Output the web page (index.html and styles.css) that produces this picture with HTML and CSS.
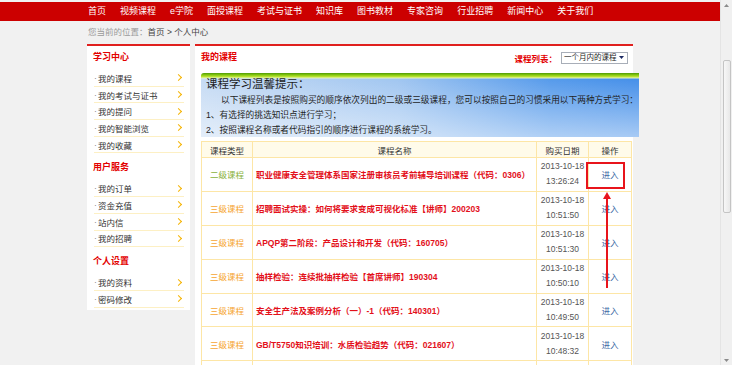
FILE: index.html
```html
<!DOCTYPE html>
<html lang="zh-CN">
<head>
  <meta charset="UTF-8">
  <title>个人中心 - 我的课程</title>
  <link rel="stylesheet" href="styles.css">
</head>
<body>
<div class="page">
  <div class="site">

    <!-- top navigation -->
    <div class="topnav">
      <div class="wrap navlinks">
        <a href="#">首页</a>
        <a href="#">视频课程</a>
        <a href="#">e学院</a>
        <a href="#">面授课程</a>
        <a href="#">考试与证书</a>
        <a href="#">知识库</a>
        <a href="#">图书教材</a>
        <a href="#">专家咨询</a>
        <a href="#">行业招聘</a>
        <a href="#">新闻中心</a>
        <a href="#">关于我们</a>
      </div>
    </div>

    <div class="wrap crumb">
      <span class="muted">您当前的位置：</span>首页 &gt; 个人中心
    </div>

    <div class="wrap columns">

      <!-- left menu -->
      <div class="side">
        <h3>学习中心</h3>
        <ul>
          <li><span class="dot">·</span>我的课程<i class="chev"></i></li>
          <li><span class="dot">·</span>我的考试与证书<i class="chev"></i></li>
          <li><span class="dot">·</span>我的提问<i class="chev"></i></li>
          <li><span class="dot">·</span>我的智能浏览<i class="chev"></i></li>
          <li><span class="dot">·</span>我的收藏<i class="chev"></i></li>
        </ul>
        <h3>用户服务</h3>
        <ul>
          <li><span class="dot">·</span>我的订单<i class="chev"></i></li>
          <li><span class="dot">·</span>资金充值<i class="chev"></i></li>
          <li><span class="dot">·</span>站内信<i class="chev"></i></li>
          <li><span class="dot">·</span>我的招聘<i class="chev"></i></li>
        </ul>
        <h3>个人设置</h3>
        <ul>
          <li><span class="dot">·</span>我的资料<i class="chev"></i></li>
          <li><span class="dot">·</span>密码修改<i class="chev"></i></li>
        </ul>
      </div>

      <!-- main content -->
      <div class="main">
        <div class="mainhead">
          <h3>我的课程</h3>
          <div class="filter">
            <span class="filter-label">课程列表：</span>
            <span class="select">一个月内的课程<svg width="5" height="3" viewBox="0 0 5 3"><path d="M0 0H5L2.5 3Z" fill="#1c2a64"/></svg></span>
          </div>
        </div>

        <div class="banner">
          <div class="banner-title">课程学习温馨提示：</div>
          <p class="indent">以下课程列表是按照购买的顺序依次列出的二级或三级课程，您可以按照自己的习惯采用以下两种方式学习：</p>
          <p>1、有选择的挑选知识点进行学习；</p>
          <p>2、按照课程名称或者代码指引的顺序进行课程的系统学习。</p>
        </div>

        <div class="tablewrap">
          <table class="courses">
            <thead>
              <tr>
                <th class="c-type">课程类型</th>
                <th class="c-name">课程名称</th>
                <th class="c-date">购买日期</th>
                <th class="c-op">操作</th>
              </tr>
            </thead>
            <tbody>
              <tr>
                <td class="lv2">二级课程</td>
                <td class="name">职业健康安全管理体系国家注册审核员考前辅导培训课程（代码：0306）</td>
                <td class="date">2013-10-18<br>13:26:24</td>
                <td class="op"><a href="#">进入</a></td>
              </tr>
              <tr>
                <td class="lv3">三级课程</td>
                <td class="name">招聘面试实操：如何将要求变成可视化标准【讲师】200203</td>
                <td class="date">2013-10-18<br>10:51:50</td>
                <td class="op"><a href="#">进入</a></td>
              </tr>
              <tr>
                <td class="lv3">三级课程</td>
                <td class="name">APQP第二阶段：产品设计和开发（代码：160705）</td>
                <td class="date">2013-10-18<br>10:51:30</td>
                <td class="op"><a href="#">进入</a></td>
              </tr>
              <tr>
                <td class="lv3">三级课程</td>
                <td class="name">抽样检验：连续批抽样检验【首席讲师】190304</td>
                <td class="date">2013-10-18<br>10:50:10</td>
                <td class="op"><a href="#">进入</a></td>
              </tr>
              <tr>
                <td class="lv3">三级课程</td>
                <td class="name">安全生产法及案例分析（一）-1（代码：140301）</td>
                <td class="date">2013-10-18<br>10:49:50</td>
                <td class="op"><a href="#">进入</a></td>
              </tr>
              <tr>
                <td class="lv3">三级课程</td>
                <td class="name">GB/T5750知识培训：水质检验趋势（代码：021607）</td>
                <td class="date">2013-10-18<br>10:48:32</td>
                <td class="op"><a href="#">进入</a></td>
              </tr>
              <tr class="more">
                <td></td>
                <td></td>
                <td></td>
                <td></td>
              </tr>
            </tbody>
          </table>

          <!-- annotation: highlight + arrow -->
          <div class="mark-box"></div>
          <svg class="mark-arrow" width="10" height="96" viewBox="0 0 10 96">
            <path d="M5 0L9 7H1Z" fill="#e8141b"/>
            <rect x="4" y="6" width="2" height="90" fill="#e8141b"/>
          </svg>
        </div>
      </div>
    </div>
  </div>

  <!-- window scrollbar -->
  <div class="scrollbar">
    <svg class="sb-arrow" width="5" height="3" viewBox="0 0 5 3"><path d="M0 3H5L2.5 0Z" fill="#8a8a8a"/></svg>
    <div class="sb-thumb"></div>
    <svg class="sb-arrow sb-down" width="5" height="3" viewBox="0 0 5 3"><path d="M0 0H5L2.5 3Z" fill="#8a8a8a"/></svg>
  </div>
</div>
</body>
</html>
```

FILE: styles.css
```css
body {
  margin: 0;
  background-color: #f1f1f1;
  font-family: "Liberation Sans", "Noto Sans CJK SC", sans-serif;
  color: #333;
}
.page {
  display: flex;
  height: 365px;
  overflow: hidden;
}
.site {
  width: 720px;
  flex: none;
}
.wrap {
  width: 546px;
  margin: 0 auto;
}

/* top nav */
.topnav {
  margin-top: 2px;
  height: 19px;
  background-color: #cc0000;
}
.navlinks {
  display: flex;
  gap: 14px;
  padding-left: 1px;
  box-sizing: border-box;
}
.navlinks a {
  color: #fff;
  font-size: 9px;
  line-height: 19px;
  text-decoration: none;
}

.crumb {
  height: 23px;
  line-height: 23px;
  font-size: 8.5px;
  color: #444;
  padding-left: 1px;
  box-sizing: border-box;
}
.crumb .muted {
  color: #9a9a9a;
}

.columns {
  display: flex;
  gap: 5px;
  align-items: flex-start;
}

/* left menu */
.side {
  width: 103px;
  flex: none;
  background: #fff;
  border-top: 2px solid #e0201e;
  padding: 0 6px 2px 6px;
  box-sizing: border-box;
}
.side h3 {
  margin: 0;
  padding: 8px 0 7px;
  font-size: 9px;
  line-height: 12px;
  color: #e30000;
  font-weight: bold;
}
.side h3:first-child {
  padding-top: 5px;
}
.side ul {
  list-style: none;
  margin: 0;
  padding: 0;
}
.side li {
  display: flex;
  align-items: center;
  margin-left: 1px;
  height: 15.7px;
  font-size: 8.5px;
  color: #333;
  border-bottom: 1px solid #fdf0c4;
}
.dot {
  width: 4px;
  color: #888;
}
.chev {
  margin-left: auto;
  margin-right: 3px;
  width: 4px;
  height: 4px;
  border-top: 1.5px solid #f5b300;
  border-right: 1.5px solid #f5b300;
  transform: rotate(45deg);
}

/* main panel */
.main {
  width: 438px;
  flex: none;
  background: #fff;
  border-top: 2px solid #e0201e;
  padding: 0 0 0 6px;
  box-sizing: border-box;
  height: 330px;
}
.mainhead {
  height: 22px;
  display: flex;
  align-items: center;
  justify-content: space-between;
  padding-right: 5px;
  margin-bottom: 5px;
}
.mainhead h3 {
  margin: 0;
  font-size: 9px;
  color: #e30000;
  font-weight: bold;
  line-height: 12px;
}
.filter {
  display: flex;
  align-items: center;
  margin-top: 1px;
}
.filter-label {
  color: #e30000;
  font-weight: bold;
  font-size: 8.5px;
  margin-right: 4px;
}
.select {
  width: 67px;
  height: 12px;
  box-sizing: border-box;
  border: 1px solid #a8aeb8;
  background: #fff;
  font-size: 7.5px;
  line-height: 10px;
  color: #222;
  padding-left: 2px;
  display: flex;
  align-items: center;
  justify-content: space-between;
  padding-right: 3px;
}

.banner {
  width: 438px;
  height: 64px;
  box-sizing: border-box;
  border-top-left-radius: 3px;
  background:
    linear-gradient(to bottom, #4e9a06 0, #86c80e 2px, #c4e83c 4px, #e6f5c0 5px, rgba(230,245,192,0) 6px),
    linear-gradient(to bottom, rgba(255,255,255,0) 0%, rgba(255,255,255,0.55) 100%),
    linear-gradient(to right, #c3d9f3 0%, #9cc3f0 45%, #4d95ea 80%, #3c8ae8 100%);
  padding: 5px 0 0 5px;
  margin-bottom: 4px;
  color: #1e1e1e;
}
.banner-title {
  font-size: 11.5px;
  line-height: 12px;
  margin-top: 0;
}
.banner p {
  margin: 0;
  font-size: 8.7px;
  line-height: 15px;
}
.banner p.indent {
  margin-top: 3px;
  text-indent: 15px;
}

/* course table */
.tablewrap {
  position: relative;
  width: 426px;
}
.courses {
  width: 426px;
  border-collapse: collapse;
  table-layout: fixed;
  font-size: 8.5px;
}
.courses th,
.courses td {
  border: 1px solid #fde6a6;
  padding: 0;
  text-align: center;
}
.courses th {
  height: 15px;
  background: #fffbea;
  color: #333;
  font-weight: normal;
}
.courses td {
  height: 32.9px;
}
.c-type { width: 50px; }
.c-name { width: 283px; }
.c-date { width: 51px; }
.c-op { width: 42px; }
.courses td.lv2 {
  color: #8ab23c;
}
.courses td.lv3 {
  color: #f6a632;
}
.courses td.name {
  text-align: left;
  padding-left: 3px;
  color: #e3101a;
  font-weight: bold;
  white-space: nowrap;
  overflow: hidden;
}
.courses td.date {
  color: #555;
  line-height: 15px;
}
.courses td.op a {
  color: #3d6aa6;
  text-decoration: none;
}

.mark-box {
  position: absolute;
  left: 385px;
  top: 21px;
  width: 39px;
  height: 27px;
  box-sizing: border-box;
  border: 2px solid #e8141b;
}
.mark-arrow {
  position: absolute;
  left: 401px;
  top: 51px;
}

/* fake window scrollbar */
.scrollbar {
  width: 12px;
  flex: none;
  background: #f0f0f0;
  border-left: 1px solid #e4e4e4;
  box-sizing: border-box;
  display: flex;
  flex-direction: column;
  align-items: center;
}
.sb-arrow {
  margin-top: 4px;
}
.sb-thumb {
  margin-top: 53px;
  width: 8px;
  height: 153px;
  box-sizing: border-box;
  border: 1px solid #c4c4c4;
  border-radius: 2px;
  background: linear-gradient(to right, #f7f7f7, #e8e8e8);
}
.sb-down {
  margin-top: auto;
  margin-bottom: 3px;
}
```
